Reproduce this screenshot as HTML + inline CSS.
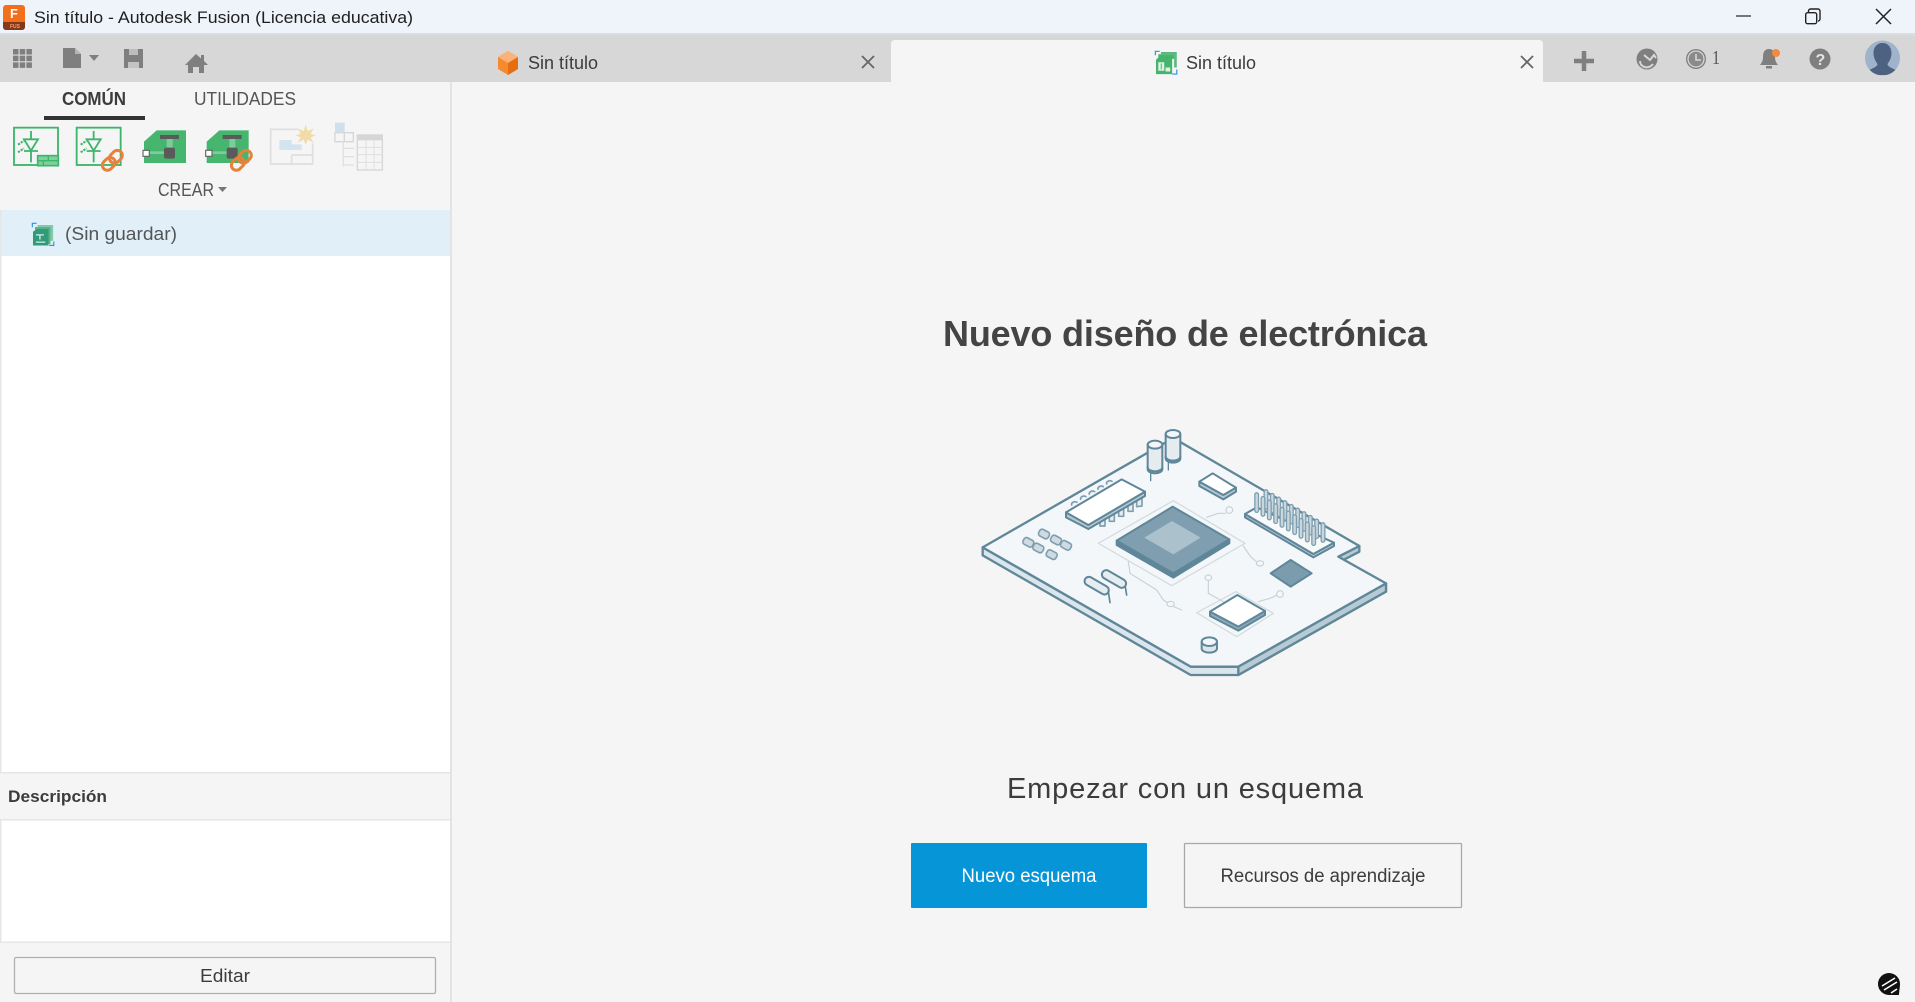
<!DOCTYPE html>
<html lang="es">
<head>
<meta charset="utf-8">
<title>Sin título - Autodesk Fusion</title>
<style>
html,body{margin:0;padding:0;width:1915px;height:1002px;overflow:hidden;background:#f5f5f5}
svg{display:block;position:absolute;left:0;top:0}
text{font-family:"Liberation Sans",sans-serif;fill:#3c3c3c}
</style>
</head>
<body>
<svg width="1915" height="1002" viewBox="0 0 1915 1002" xmlns="http://www.w3.org/2000/svg">
<defs>
<clipPath id="av"><circle cx="1882.500" cy="58" r="17.500"/></clipPath>
<g id="diode" fill="none" stroke="#3db56c" stroke-width="5.500">
<path d="M93 393V418M93 452V487M72 418H114L93 452ZM72 453H114"/>
<path d="M54 434L72 422M54 457L72 445" stroke-width="6" stroke-dasharray="7 3"/>
</g>
<g id="pcb">
<path d="M432 425L470 391H558V489H432Z" fill="#46b56e"/>
<rect x="480" y="405" width="57" height="12" fill="#5a5a5a"/>
<rect x="500" y="417" width="18" height="28" fill="#7fcb9b"/>
<rect x="445" y="454" width="50" height="8" fill="#7fcb9b"/>
<rect x="492" y="443" width="33" height="33" rx="6" fill="#5a5a5a"/>
<rect x="429" y="451" width="19" height="18" fill="#fff" stroke="#666" stroke-width="3.500"/>
</g>
<g id="link" fill="none" stroke="#e8813a" stroke-width="9">
<rect x="-36" y="-15" width="42" height="30" rx="15" transform="rotate(-45)"/>
<rect x="-6" y="-15" width="42" height="30" rx="15" transform="rotate(-45)"/>
</g>
<g id="doc">
<path d="M17 6H64V54H17Z" fill="#86c9a8"/>
<path d="M9 12H56V64H9Z" fill="#5cb08f"/>
<path d="M3 26L16 18H50V68H3Z" fill="#2f9b78"/>
<path d="M12 36H36M24 36V50M12 58H40" stroke="#d5efe5" stroke-width="4" fill="none"/>
<path d="M1 13V1H14M52 68H66V56" fill="none" stroke="#2c8fe0" stroke-width="3.500"/>
</g>
<g id="doc2">
<path d="M18 3H66V50H18Z" fill="#5cb880"/>
<path d="M10 10H58V62H10Z" fill="#f5f5f5"/>
<path d="M10 10H58V24H10Z" fill="#45b56d"/>
<path d="M3 26L14 16H52V70H3Z" fill="#45b56d"/>
<path d="M10 34H28V60H10ZM32 50H46V62H32Z" fill="#dff2e6"/>
<path d="M19 38V56" stroke="#45b56d" stroke-width="3"/>
<path d="M1 13V1H14M52 70H66V56" fill="none" stroke="#2c8fe0" stroke-width="3.500"/>
</g>
</defs>

<!-- title bar -->
<rect x="0" y="0" width="1915" height="34" fill="#eff4fa"/>
<rect x="0" y="34" width="1915" height="48" fill="#d7d7d7"/>
<rect x="0" y="33" width="1915" height="2" fill="#dcdee0"/>
<rect x="3" y="5" width="22" height="25" rx="3" fill="#f26f1d"/>
<path d="M3 22H25V27a3 3 0 0 1-3 3H6a3 3 0 0 1-3-3Z" fill="#86391a"/>
<text x="10" y="18" font-size="13" font-weight="700" style="fill:#fff">F</text>
<text x="10" y="28" font-size="5" font-weight="700" style="fill:#f5a06a">FUS</text>
<text x="34" y="23" font-size="17" textLength="379" lengthAdjust="spacingAndGlyphs" style="fill:#1f1f1f">Sin título - Autodesk Fusion (Licencia educativa)</text>

<!-- window controls -->
<path d="M1736 16H1751" stroke="#222" stroke-width="1.200"/>
<rect x="1805.700" y="12.700" width="11" height="11" rx="2" fill="none" stroke="#222" stroke-width="1.400"/>
<path d="M1808.500 12V11a2 2 0 0 1 2-2H1818a2 2 0 0 1 2 2v8a2 2 0 0 1-2 2" fill="none" stroke="#222" stroke-width="1.400"/>
<path d="M1876 9L1891 24M1891 9L1876 24" stroke="#222" stroke-width="1.500"/>

<!-- left toolbar icons -->
<g fill="#7f7f7f">
<rect x="13" y="49" width="5.500" height="5.500"/><rect x="19.700" y="49" width="5.500" height="5.500"/><rect x="26.400" y="49" width="5.500" height="5.500"/>
<rect x="13" y="55.700" width="5.500" height="5.500"/><rect x="19.700" y="55.700" width="5.500" height="5.500"/><rect x="26.400" y="55.700" width="5.500" height="5.500"/>
<rect x="13" y="62.400" width="5.500" height="5.500"/><rect x="19.700" y="62.400" width="5.500" height="5.500"/><rect x="26.400" y="62.400" width="5.500" height="5.500"/>
<path d="M63 48H75L81 54V68H63Z"/>
<path d="M89 55H99L94 61Z"/>
<path d="M124 49H143V68H124Z"/>
<path d="M196 54L201 58.500V55H204V61L208 65H204V73H199V67H193V73H188V65H185Z"/>
</g>
<path d="M75 48V54H81Z" fill="#b5b5b5"/>
<rect x="129" y="49" width="9" height="6" fill="#bdbdbd"/>
<rect x="128" y="62" width="11" height="6" fill="#c4c4c4"/>

<!-- tabs -->
<path d="M891 82V44a4 4 0 0 1 4-4H1539a4 4 0 0 1 4 4V82Z" fill="#f5f5f5"/>
<path d="M508 51L518 57V69L508 75L498 69V57Z" fill="#f58a2e"/>
<path d="M508 51L518 57L508 63L498 57Z" fill="#fbb27a"/>
<path d="M508 63L518 57V69L508 75Z" fill="#e56f10"/>
<text x="528" y="69" font-size="18" textLength="70" lengthAdjust="spacingAndGlyphs">Sin título</text>
<path d="M862 56L874 68M874 56L862 68" stroke="#666" stroke-width="1.800"/>
<g transform="translate(1155 51) scale(.33)"><use href="#doc2"/></g>
<text x="1186" y="69" font-size="18" textLength="70" lengthAdjust="spacingAndGlyphs">Sin título</text>
<path d="M1521 56L1533 68M1533 56L1521 68" stroke="#666" stroke-width="1.800"/>

<!-- right toolbar icons -->
<path d="M1574 61H1594M1584 51V71" stroke="#7f7f7f" stroke-width="4.500"/>
<circle cx="1647" cy="59" r="10.500" fill="#7f7f7f"/>
<path d="M1640 61c0 6 8 9 13 3M1644 55l6 5 4-5 2 3" stroke="#d7d7d7" stroke-width="2" fill="none"/>
<circle cx="1696" cy="59" r="10" fill="#7f7f7f"/>
<circle cx="1696" cy="59" r="8" fill="#8a8a8a" stroke="#d7d7d7" stroke-width="1.300"/>
<path d="M1696 54V60H1701" stroke="#d7d7d7" stroke-width="1.600" fill="none"/>
<text x="1712" y="64" font-size="20" textLength="8" lengthAdjust="spacingAndGlyphs" style="font-family:'Liberation Serif',serif;fill:#555">1</text>
<path d="M1769 49c-5 0-6 4-6 8c0 4-1.500 6-3 8H1778c-1.500-2-3-4-3-8c0-4-1-8-6-8Z" fill="#7f7f7f"/>
<rect x="1766" y="66" width="6" height="2.500" fill="#7f7f7f"/>
<circle cx="1776" cy="53" r="4" fill="#f58a3a"/>
<circle cx="1820" cy="59" r="10.500" fill="#7f7f7f"/>
<text x="1815.500" y="65" font-size="16" font-weight="700" style="fill:#e4e4e4">?</text>
<circle cx="1882.500" cy="58" r="17.500" fill="#9fb3cc"/>
<g clip-path="url(#av)">
<path d="M1882.500 43c-6 0-9 5-9 10c0 5 2 8 4 11c0 2-2 3-6 5c-3 1-4 3-5 6h32c-1-3-2-5-5-6c-4-2-6-3-6-5c2-3 4-6 4-11c0-5-3-10-9-10Z" fill="#4d6180"/>
</g>

<!-- left panel -->
<rect x="0" y="82" width="450" height="920" fill="#f5f5f5"/>
<rect x="450" y="82" width="2" height="920" fill="#e3e3e3"/>
<text x="62" y="105" font-size="18" font-weight="700" textLength="64" lengthAdjust="spacingAndGlyphs">COMÚN</text>
<text x="194" y="105" font-size="18" textLength="102" lengthAdjust="spacingAndGlyphs" style="fill:#555">UTILIDADES</text>
<rect x="44" y="116" width="101" height="4" fill="#333"/>

<g transform="scale(.33333)">
<!-- icon 1 -->
<rect x="42" y="383" width="132" height="112" fill="none" stroke="#3db56c" stroke-width="5.500"/>
<use href="#diode"/>
<rect x="113" y="467" width="62" height="30" fill="#7fd09d" stroke="#3db56c" stroke-width="5"/>
<path d="M113 482H175M145 467V482M130 482V497" stroke="#3db56c" stroke-width="4"/>
<!-- icon 2 -->
<rect x="230" y="383" width="132" height="112" fill="none" stroke="#3db56c" stroke-width="5.500"/>
<use href="#diode" x="188"/>
<use href="#link" transform="translate(337 481)"/>
<!-- icon 3 -->
<use href="#pcb"/>
<!-- icon 4 -->
<use href="#pcb" x="188"/>
<use href="#link" transform="translate(724 481)"/>
<!-- icon 5 -->
<path d="M895 388H812V492H938V430" fill="none" stroke="#dedede" stroke-width="5"/>
<path d="M875 465H938M875 465V492" fill="none" stroke="#dedede" stroke-width="5"/>
<path d="M838 420H875V433H905V450H838Z" fill="#d3e4ef"/>
<path d="M917 374L923 393L941 385L932 401L947 406L932 412L941 428L923 419L917 434L911 419L893 428L902 412L887 406L902 401L893 385L911 393Z" fill="#f1dca9"/>
<!-- icon 6 -->
<rect x="1005" y="368" width="29" height="30" fill="#cde0ee"/>
<path d="M1005 398H1060V425H1005ZM1033 398V425" fill="none" stroke="#d6d6d6" stroke-width="4"/>
<path d="M1030 425V500M1030 445H1062M1030 470H1062M1030 495H1062" fill="none" stroke="#e0e0e0" stroke-width="4"/>
<rect x="1072" y="405" width="75" height="105" fill="none" stroke="#d6d6d6" stroke-width="4"/>
<rect x="1072" y="405" width="75" height="16" fill="#d6d6d6"/>
<path d="M1072 442H1147M1072 464H1147M1072 487H1147M1098 421V510M1122 421V510" fill="none" stroke="#dedede" stroke-width="3"/>
</g>
<text x="158" y="196" font-size="18" textLength="56" lengthAdjust="spacingAndGlyphs" style="fill:#555">CREAR</text>
<path d="M218 187H227L222.500 192Z" fill="#777"/>

<!-- tree -->
<rect x="0" y="210" width="450" height="46" fill="#e1f0f8"/>
<rect x="0" y="256" width="450" height="516" fill="#fff"/>
<rect x="0" y="210" width="1.500" height="562" fill="#e6e6e6"/>
<g transform="translate(32 223)  scale(.33)"><use href="#doc"/></g>
<text x="65" y="240" font-size="18" textLength="112" lengthAdjust="spacingAndGlyphs" style="fill:#555">(Sin guardar)</text>

<!-- description -->
<rect x="0" y="772" width="450" height="1.500" fill="#e6e6e6"/>
<text x="8" y="802" font-size="17" font-weight="700" textLength="99" lengthAdjust="spacingAndGlyphs">Descripción</text>
<rect x="1" y="820" width="449" height="122" fill="#fff"/>
<rect x="0" y="819" width="450" height="1.500" fill="#e6e6e6"/>
<rect x="0" y="941.500" width="450" height="1.500" fill="#e6e6e6"/>
<rect x="0" y="820" width="1.500" height="122" fill="#e6e6e6"/>
<rect x="14.500" y="957.500" width="421" height="36" rx="1.500" fill="#f5f5f5" stroke="#b0b0b0" stroke-width="1.300"/>
<text x="200" y="982" font-size="18" textLength="50" lengthAdjust="spacingAndGlyphs">Editar</text>

<!-- main -->
<text x="943" y="346" font-size="36" font-weight="700" textLength="484" lengthAdjust="spacing" style="fill:#444">Nuevo diseño de electrónica</text>

<g transform="translate(960 410) scale(.33333)" stroke-linejoin="round" stroke-linecap="round" style="filter:blur(.9px)">
<!-- board -->
<path d="M68 412V436L692 795H835L1278 545V520L835 770H692Z" fill="#dbe6ec" stroke="#5f8699" stroke-width="7"/>
<path d="M835 770V795L1278 545V520Z" fill="#b7cbd5" stroke="#5f8699" stroke-width="7"/>
<path d="M1198 408V425L1150 450L1135 440Z" fill="#b7cbd5" stroke="#5f8699" stroke-width="7"/>
<path d="M68 412L640 84L1198 408L1135 440L1278 520L835 770H692Z" fill="#f4f7fa" stroke="#5f8699" stroke-width="7"/>
<!-- footprints -->
<path d="M415 400L640 272L855 400L635 527Z" fill="none" stroke="#d3dcdf" stroke-width="4"/>
<path d="M710 608L828 545L940 610L830 680Z" fill="none" stroke="#d3dcdf" stroke-width="4"/>
<g fill="none" stroke="#c8d2d6" stroke-width="3.500">
<path d="M740 322L775 310L797 310"/><circle cx="808" cy="300" r="10"/>
<path d="M850 408L872 440L890 456"/><ellipse cx="900" cy="460" rx="11" ry="8"/>
<path d="M505 455L510 490L590 540L610 570L622 578M642 590L665 600"/><ellipse cx="632" cy="582" rx="11" ry="8"/>
<path d="M745 513V550L790 575"/><ellipse cx="745" cy="503" rx="10" ry="8"/>
<path d="M895 575L930 565L950 556"/><circle cx="960" cy="552" r="10"/>
</g>
<!-- main chip -->
<path d="M470 392V405L640 503L808 400V388L640 490Z" fill="#5f8699" stroke="#5f8699" stroke-width="6"/>
<path d="M470 392L638 290L808 388L640 490Z" fill="#7f9fb0" stroke="#5f8699" stroke-width="6"/>
<path d="M553 383L636 333L722 383L640 433Z" fill="#abc1cc"/>
<!-- small chip -->
<path d="M932 490L992 450L1055 490L992 530Z" fill="#7b9cad" stroke="#5f8699" stroke-width="6"/>
<!-- white chip -->
<path d="M750 605V618L835 662L915 615V603L835 650Z" fill="#8fadbb" stroke="#5f8699" stroke-width="6"/>
<path d="M750 605L832 555L915 603L835 650Z" fill="#fff" stroke="#5f8699" stroke-width="6"/>
<!-- small top rect -->
<path d="M718 215V228L790 268L828 245V233L790 255Z" fill="#b7cbd5" stroke="#5f8699" stroke-width="6"/>
<path d="M718 215L758 190L828 233L790 255Z" fill="#fff" stroke="#5f8699" stroke-width="6"/>
<!-- IC -->
<g fill="#e6edf1" stroke="#7f9fb0" stroke-width="5">
<path d="M335 285a10 8 0 0 1 16-8M362 268a10 8 0 0 1 16-8M388 253a10 8 0 0 1 16-8M414 238a10 8 0 0 1 16-8M440 222a10 8 0 0 1 16-8"/>
<path d="M420 330V348L435 348L435 325M448 315V334L463 334L463 310M476 300V319L491 319L491 295M504 286V304L519 304L519 280M530 270V290L546 288L546 265"/>
</g>
<path d="M318 307V322L385 357L555 258V245L385 345Z" fill="#b7cbd5" stroke="#5f8699" stroke-width="6"/>
<path d="M318 307L485 208L555 245L385 345Z" fill="#fff" stroke="#5f8699" stroke-width="6"/>
<!-- header -->
<path d="M855 312V322L1060 442L1122 408V398L1060 432Z" fill="#b7cbd5" stroke="#5f8699" stroke-width="6"/>
<path d="M855 312L890 292L1122 398L1060 432Z" fill="#f7fafb" stroke="#5f8699" stroke-width="6"/>
<path d="M918 292V245M937 303V256M956 314V267M975 325V278M994 336V289M1013 347V300M1032 358V311M1051 369V322M1070 380V333M1089 391V344" stroke="#7f9fb0" stroke-width="15"/>
<path d="M918 292V245M937 303V256M956 314V267M975 325V278M994 336V289M1013 347V300M1032 358V311M1051 369V322M1070 380V333M1089 391V344" stroke="#c9d7de" stroke-width="7"/>
<path d="M890 302V254M909 313V265M928 324V276M947 335V287M966 346V298M985 357V309M1004 368V320M1023 379V331M1042 390V342M1061 401V353" stroke="#7f9fb0" stroke-width="15"/>
<path d="M890 302V254M909 313V265M928 324V276M947 335V287M966 346V298M985 357V309M1004 368V320M1023 379V331M1042 390V342M1061 401V353" stroke="#c9d7de" stroke-width="7"/>
<!-- pads -->
<g fill="#cfdbe1" stroke="#7f9fb0" stroke-width="5">
<rect x="-16" y="-11" width="32" height="22" rx="8" transform="translate(252 372) rotate(28)"/>
<rect x="-16" y="-11" width="32" height="22" rx="8" transform="translate(288 390) rotate(28)"/>
<rect x="-16" y="-11" width="32" height="22" rx="8" transform="translate(318 406) rotate(28)"/>
<rect x="-16" y="-11" width="32" height="22" rx="8" transform="translate(205 397) rotate(28)"/>
<rect x="-16" y="-11" width="32" height="22" rx="8" transform="translate(235 414) rotate(28)"/>
<rect x="-16" y="-11" width="32" height="22" rx="8" transform="translate(275 434) rotate(28)"/>
</g>
<!-- resistors -->
<path d="M445 545L450 578M495 525L500 555" stroke="#5f8699" stroke-width="5" fill="none"/>
<g fill="#e6edf1" stroke="#5f8699" stroke-width="6">
<rect x="-40" y="-13" width="80" height="26" rx="13" transform="translate(410 527) rotate(30)"/>
<rect x="-40" y="-13" width="80" height="26" rx="13" transform="translate(462 507) rotate(30)"/>
</g>
<!-- cylinder -->
<path d="M725 695V716a23 12 0 0 0 46 0V695Z" fill="#dbe6ec" stroke="#5f8699" stroke-width="6"/>
<ellipse cx="748" cy="695" rx="23" ry="13" fill="#f3f6f9" stroke="#5f8699" stroke-width="6"/>
<!-- capacitors -->
<path d="M572 190L572 212M625 160V180" stroke="#5f8699" stroke-width="4"/>
<g stroke="#5f8699" stroke-width="6">
<path d="M563 104V178a22 12 0 0 0 44 0V104Z" fill="#e4ecf0"/>
<ellipse cx="585" cy="104" rx="22" ry="12" fill="#f3f6f9"/>
<path d="M563 172a22 12 0 0 0 44 0" fill="none"/>
<path d="M617 72V146a22 12 0 0 0 44 0V72Z" fill="#e4ecf0"/>
<ellipse cx="639" cy="72" rx="22" ry="12" fill="#f3f6f9"/>
<path d="M617 140a22 12 0 0 0 44 0" fill="none"/>
</g>
</g>

<text x="1007" y="798" font-size="29" textLength="356" lengthAdjust="spacing">Empezar con un esquema</text>

<rect x="911" y="843" width="236" height="65" rx="1" fill="#0696d7"/>
<text x="961.500" y="882" font-size="19" textLength="135" lengthAdjust="spacingAndGlyphs" style="fill:#fff">Nuevo esquema</text>
<rect x="1184.500" y="843.500" width="277" height="64" rx="1" fill="#f5f5f5" stroke="#a8a8a8" stroke-width="1.300"/>
<text x="1220.500" y="882" font-size="19" textLength="205" lengthAdjust="spacingAndGlyphs">Recursos de aprendizaje</text>

<!-- bottom-right icon -->
<path d="M1889 973a11 11 0 0 1 11 11c0 3-1 8-1 11h-10a11 11 0 0 1 0-22Z" fill="#111"/>
<path d="M1882 986L1895 978M1884 990L1897 982M1891 993L1897 989" stroke="#fff" stroke-width="1.600"/>
</svg>
</body>
</html>
